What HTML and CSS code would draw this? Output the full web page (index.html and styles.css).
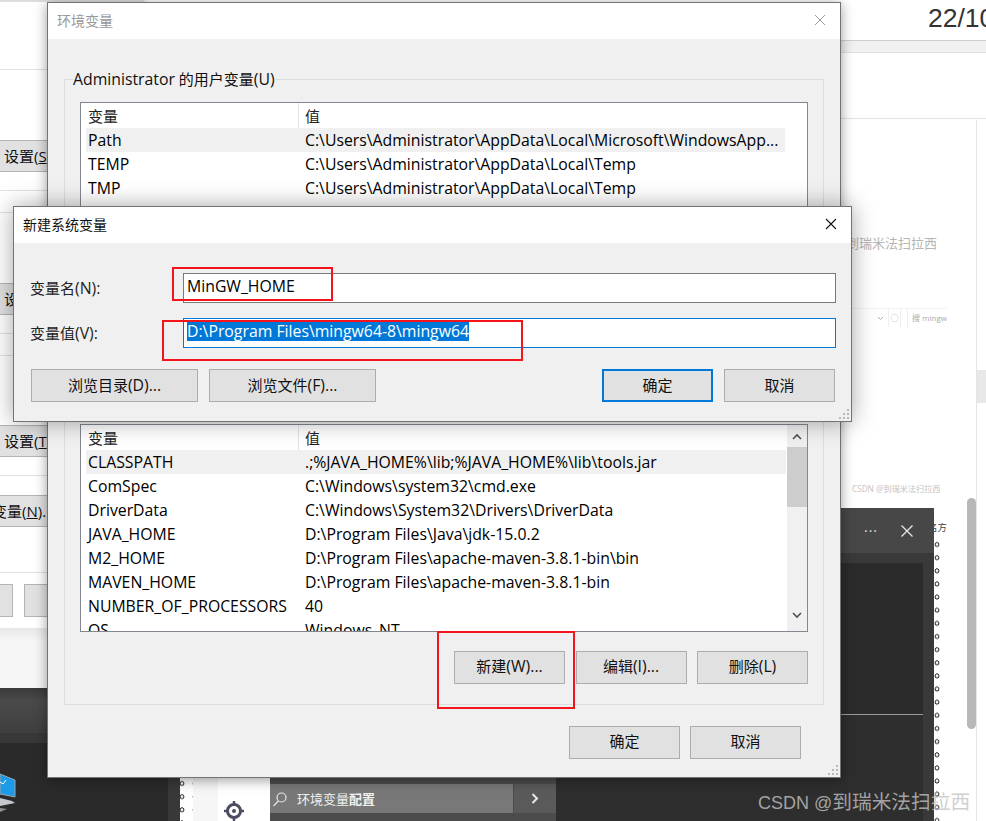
FILE: index.html
```html
<!DOCTYPE html>
<html lang="zh-CN">
  <head>
    <meta charset="UTF-8" />
    <meta name="viewport" content="width=device-width, initial-scale=1.0" />
    <title>环境变量</title>
    <link rel="stylesheet" href="styles.css">
  </head>
  <body>
    <div class="desk">
      <!-- blog page behind everything -->
      <div class="blog">
        <div class="blog-date">22/10</div>
        <div class="blog-band"></div>
        <div class="blog-head"></div>
        <div class="blog-side"></div>
        <div class="blog-side-block"></div>
        <div class="blog-scroll"></div>
        <div class="blog-author">到瑞米法扫拉西</div>
        <div class="blog-tools">
          <span class="blog-select"><svg width="7" height="5" viewBox="0 0 7 5"><path d="M1 1l2.500 2.500L6 1" fill="none" stroke="#aaa" stroke-width="1"/></svg></span>
          <span class="blog-tool">&#9675;</span>
          <span class="blog-search">搜 mingw</span>
        </div>
        <div class="blog-mark">CSDN @到瑞米法扫拉西</div>
        <div class="blog-label">名方</div>
      </div>

      <!-- system properties window, only the left edge shows -->
      <div class="side-win">
        <div class="side-line first"></div>
        <div class="side-btn top-a">设置(<u>S</u></div>
        <div class="side-line near"></div>
        <div class="side-line far"></div>
        <div class="side-btn top-b">设置</div>
        <div class="side-line near"></div>
        <div class="side-line far"></div>
        <div class="side-btn top-c">设置(<u>T</u></div>
        <div class="side-line near"></div>
        <div class="side-btn top-d cut">变量(<u>N</u>).</div>
        <div class="side-line low"></div>
        <div class="side-foot">
          <div class="side-btn small"></div>
          <div class="side-btn wide"></div>
        </div>
      </div>
      <div class="side-under"></div>

      <!-- dark window bottom left -->
      <div class="dark-left">
        <div class="dark-left-head"></div>
        <svg class="pc-icon" width="16" height="40" viewBox="0 0 16 40">
          <path d="M0 2l15 6v17L0 22z" fill="#1e9be8" stroke="#9aa4ad" stroke-width="1"/>
          <path d="M0 10l3 2 3-4" fill="none" stroke="#fff" stroke-width="1"/>
          <path d="M0 26l12 3 3 2-15 3z" fill="#c4c8cc"/>
          <path d="M0 36l7 1-7 3z" fill="#8d9196"/>
        </svg>
      </div>
      <div class="ring-strip strip-left"></div>
      <div class="white-col">
        <svg width="20" height="20" viewBox="0 0 20 20">
          <circle cx="10" cy="10" r="6.500" fill="none" stroke="#4c4c63" stroke-width="3"/>
          <circle cx="10" cy="10" r="2" fill="#4c4c63"/>
          <path d="M10 0v5M10 15v5M0 10h5M15 10h5" stroke="#4c4c63" stroke-width="2.500"/>
        </svg>
      </div>
      <div class="search-area">
        <div class="search-box">
          <svg width="16" height="16" viewBox="0 0 16 16">
            <circle cx="9.500" cy="6.500" r="4.500" fill="none" stroke="#e6e6e6" stroke-width="1.200"/>
            <path d="M6.300 10L1.500 15" stroke="#e6e6e6" stroke-width="1.200"/>
          </svg>
          <span class="search-text">环境变量<b>配置</b></span>
        </div>
        <div class="search-go">
          <svg width="8" height="11" viewBox="0 0 8 11"><path d="M1.500 1l4.500 4.500L1.500 10" fill="none" stroke="#e8e8e8" stroke-width="2"/></svg>
        </div>
      </div>

      <!-- dark window bottom right -->
      <div class="dark-right">
        <div class="dark-title">
          <span class="dark-dots">···</span>
          <svg width="14" height="14" viewBox="0 0 14 14"><path d="M1.500 1.500l11 11M12.500 1.500l-11 11" stroke="#e8e8e8" stroke-width="1.300"/></svg>
        </div>
        <div class="dark-body">
          <div class="dark-pane"></div>
          <div class="dark-pane-low"></div>
        </div>
      </div>
      <div class="ring-strip strip-right"></div>

      <!-- 环境变量 -->
      <div class="win env-win">
        <div class="win-title muted">
          <span>环境变量</span>
          <svg width="12" height="12" viewBox="0 0 12 12"><path d="M1 1l10 10M11 1L1 11" stroke="#9a9a9a" stroke-width="1"/></svg>
        </div>
        <div class="env-body">
          <fieldset class="group">
            <legend><span class="en">Administrator</span> 的用户变量<span class="en">(U)</span></legend>
            <div class="list list-user">
              <div class="list-head"><span class="col-name">变量</span><span class="col-value">值</span></div>
              <div class="list-row active"><span class="col-name">Path</span><span class="col-value">C:\Users\Administrator\AppData\Local\Microsoft\WindowsApp...</span></div>
              <div class="list-row"><span class="col-name">TEMP</span><span class="col-value">C:\Users\Administrator\AppData\Local\Temp</span></div>
              <div class="list-row"><span class="col-name">TMP</span><span class="col-value">C:\Users\Administrator\AppData\Local\Temp</span></div>
            </div>
            <div class="list list-system">
              <div class="list-rows">
                <div class="list-head"><span class="col-name">变量</span><span class="col-value">值</span></div>
                <div class="list-row active"><span class="col-name">CLASSPATH</span><span class="col-value">.;%JAVA_HOME%\lib;%JAVA_HOME%\lib\tools.jar</span></div>
                <div class="list-row"><span class="col-name">ComSpec</span><span class="col-value">C:\Windows\system32\cmd.exe</span></div>
                <div class="list-row"><span class="col-name">DriverData</span><span class="col-value">C:\Windows\System32\Drivers\DriverData</span></div>
                <div class="list-row"><span class="col-name">JAVA_HOME</span><span class="col-value">D:\Program Files\Java\jdk-15.0.2</span></div>
                <div class="list-row"><span class="col-name">M2_HOME</span><span class="col-value">D:\Program Files\apache-maven-3.8.1-bin\bin</span></div>
                <div class="list-row"><span class="col-name">MAVEN_HOME</span><span class="col-value">D:\Program Files\apache-maven-3.8.1-bin</span></div>
                <div class="list-row"><span class="col-name">NUMBER_OF_PROCESSORS</span><span class="col-value">40</span></div>
                <div class="list-row"><span class="col-name">OS</span><span class="col-value">Windows_NT</span></div>
              </div>
              <div class="scrollbar">
                <svg width="10" height="7" viewBox="0 0 10 7"><path d="M1 6l4-4 4 4" fill="none" stroke="#505050" stroke-width="1.600"/></svg>
                <div class="scroll-track"><div class="scroll-thumb"></div></div>
                <svg width="10" height="7" viewBox="0 0 10 7"><path d="M1 1l4 4 4-4" fill="none" stroke="#505050" stroke-width="1.600"/></svg>
              </div>
            </div>
            <div class="btn-row list-btns">
              <div class="btn">新建<span class="en">(W)...</span></div>
              <div class="btn">编辑<span class="en">(I)...</span></div>
              <div class="btn">删除<span class="en">(L)</span></div>
            </div>
          </fieldset>
          <div class="btn-row env-btns">
            <div class="btn">确定</div>
            <div class="btn">取消</div>
          </div>
        </div>
        <svg class="grip" width="11" height="11" viewBox="0 0 11 11"><path d="M8 0h2v2H8zM8 4h2v2H8zM8 8h2v2H8zM4 4h2v2H4zM4 8h2v2H4zM0 8h2v2H0z" fill="#b8b8b8"/></svg>
      </div>

      <!-- 新建系统变量 -->
      <div class="win new-win">
        <div class="win-title">
          <span>新建系统变量</span>
          <svg width="12" height="12" viewBox="0 0 12 12"><path d="M1 1l10 10M11 1L1 11" stroke="#111" stroke-width="1.100"/></svg>
        </div>
        <div class="new-body">
          <div class="field">
            <label>变量名<span class="en">(N):</span></label>
            <div class="text-box">MinGW_HOME</div>
          </div>
          <div class="field">
            <label>变量值<span class="en">(V):</span></label>
            <div class="text-box focus"><span class="picked">D:\Program Files\mingw64-8\mingw64</span></div>
          </div>
          <div class="new-btns">
            <div class="btn-row">
              <div class="btn browse">浏览目录<span class="en">(D)...</span></div>
              <div class="btn browse">浏览文件<span class="en">(F)...</span></div>
            </div>
            <div class="btn-row">
              <div class="btn default">确定</div>
              <div class="btn">取消</div>
            </div>
          </div>
        </div>
        <svg class="grip" width="11" height="11" viewBox="0 0 11 11"><path d="M8 0h2v2H8zM8 4h2v2H8zM8 8h2v2H8zM4 4h2v2H4zM4 8h2v2H4zM0 8h2v2H0z" fill="#b8b8b8"/></svg>
      </div>

      <!-- red marks added on the screenshot -->
      <div class="mark mark-name"></div>
      <div class="mark mark-value"></div>
      <div class="mark mark-new"></div>

      <div class="watermark">CSDN @<span class="watermark-name">到瑞米法扫拉西</span></div>
    </div>
  </body>
</html>
```

FILE: styles.css
```css
html,
body {
  margin: 0;
  padding: 0;
}

body {
  font-family: "Open Sans", "Noto Sans CJK SC", sans-serif;
  font-size: 15px;
  color: #000;
}

/* latin text runs a bit larger than the chinese in the screenshot */
.en {
  font-size: 15.800px;
}

.desk {
  position: relative;
  width: 986px;
  height: 821px;
  overflow: hidden;
  background-color: #fff;
}

/* blog page */
.blog {
  position: absolute;
  left: 840px;
  top: 0;
  width: 146px;
  height: 821px;
}

.blog-date {
  padding: 1px 0 0 88px;
  height: 40px;
  box-sizing: border-box;
  font-family: "Liberation Sans", sans-serif;
  font-size: 26.500px;
  line-height: 34px;
  color: #333;
  white-space: nowrap;
}

.blog-band {
  height: 11px;
  background-color: #f1f1f1;
  border-top: 1px solid #cfcfcf;
  border-bottom: 1px solid #e2e2e2;
}

.blog-head {
  height: 65px;
  border-bottom: 1px solid #e4e4e4;
}

.blog-side {
  position: absolute;
  left: 136px;
  top: 120px;
  width: 1px;
  height: 701px;
  background-color: #e4e4e4;
}

.blog-side-block {
  position: absolute;
  left: 137px;
  top: 370px;
  width: 9px;
  height: 33px;
  background-color: #e8e8e8;
}

.blog-scroll {
  position: absolute;
  left: 127px;
  top: 498px;
  width: 9px;
  height: 231px;
  border-radius: 5px;
  background-color: #b8b8b8;
}

.blog-author {
  position: absolute;
  left: 6px;
  top: 234px;
  font-size: 13px;
  line-height: 18px;
  color: #b5b5b5;
  white-space: nowrap;
}

.blog-tools {
  position: absolute;
  left: 0;
  top: 308px;
  width: 107px;
  height: 18px;
  display: flex;
  overflow: hidden;
  border-top: 1px solid #f2f2f2;
  font-size: 8px;
  line-height: 17px;
  color: #aaa;
}

.blog-select {
  width: 59px;
  box-sizing: border-box;
  padding-right: 4px;
  text-align: right;
  border-right: 1px solid #eee;
}

.blog-tool {
  width: 14px;
  text-align: center;
  border-right: 1px solid #eee;
  margin-right: 6px;
}

.blog-search {
  white-space: nowrap;
  padding-left: 4px;
  border-left: 1px solid #eee;
}

.blog-mark {
  position: absolute;
  left: 12px;
  top: 482px;
  font-size: 8.200px;
  line-height: 14px;
  color: #c4c4c4;
  white-space: nowrap;
}

.blog-label {
  position: absolute;
  left: 94px;
  top: 521px;
  width: 13px;
  overflow: hidden;
  direction: rtl;
  font-size: 9.500px;
  line-height: 14px;
  color: #444;
  white-space: nowrap;
}

/* window behind on the left */
.side-win {
  position: absolute;
  left: 0;
  top: 0;
  width: 144px;
  height: 628px;
  box-sizing: border-box;
  padding-top: 69px;
  background-color: #fff;
  border-top: 2px solid #ddd;
  box-shadow: 0 2px 6px rgba(0, 0, 0, 0.45);
}

.side-line {
  height: 1px;
  background-color: #e2e2e2;
}

.side-line.first {
  margin-top: -2px;
}

.side-line.near {
  margin-top: 18px;
}

.side-line.far {
  margin-top: 21px;
}

.side-line.low {
  margin-top: 45px;
}

.side-btn {
  height: 32px;
  box-sizing: border-box;
  margin-left: -1px;
  padding-left: 4px;
  background-color: #e1e1e1;
  border: 1px solid #b4b4b4;
  line-height: 30px;
  white-space: nowrap;
  overflow: hidden;
  color: #111;
}

.side-btn.top-a {
  margin-top: 70px;
}

.side-btn.top-b {
  margin-top: 70px;
}

.side-btn.top-c {
  margin-top: 69px;
}

.side-btn.top-d {
  margin-top: 19px;
}

.side-btn.cut {
  text-indent: -12px;
}

.side-foot {
  display: flex;
  gap: 11px;
  margin-top: 11px;
}

.side-foot .side-btn {
  height: 33px;
  margin-left: 0;
}

.side-btn.small {
  width: 14px;
  margin-left: -1px;
}

.side-btn.wide {
  width: 60px;
}

.side-under {
  position: absolute;
  left: 0;
  top: 628px;
  width: 144px;
  height: 60px;
  background: linear-gradient(#e8e8e8, #f6f6f6 14px, #f6f6f6);
}

/* dark windows */
.dark-left {
  position: absolute;
  left: 0;
  top: 688px;
  width: 168px;
  height: 133px;
  background-color: #2a2a2a;
  border-right: 12px solid #383838;
}

.dark-left-head {
  height: 45px;
  background: linear-gradient(#3a3a3a, #4a4a4a 30%, #3f3f3f);
  border-bottom: 10px solid #383838;
}

.pc-icon {
  position: absolute;
  left: 0;
  top: 84px;
}

.ring-strip {
  position: absolute;
  width: 13px;
  background-color: #fff;
  background-image: radial-gradient(circle at 6px 6.500px, #fff 1.200px, #333 1.700px, #333 2.200px, transparent 2.700px);
  background-size: 13px 13.150px;
}

.strip-left {
  left: 180px;
  top: 778px;
  height: 43px;
  background-position: -4px -1px;
}

.strip-right {
  left: 934px;
  top: 538px;
  height: 283px;
  background-position: -3px 0;
}

.white-col {
  position: absolute;
  left: 193px;
  top: 777px;
  width: 77px;
  height: 44px;
  background: linear-gradient(90deg, #f6f6f6 25px, #fff 25px);
  display: flex;
  justify-content: flex-end;
  align-items: flex-end;
  padding-right: 26px;
  box-sizing: border-box;
}

.search-area {
  position: absolute;
  left: 270px;
  top: 777px;
  width: 296px;
  height: 44px;
  box-sizing: border-box;
  padding: 7px 0 8px 0;
  display: flex;
  gap: 1px;
  background-color: #4c4c4c;
  border-right: 10px solid #363636;
}

.search-box {
  width: 243px;
  display: flex;
  align-items: center;
  gap: 9px;
  padding-left: 2px;
  box-sizing: border-box;
  background-color: #787878;
}

.search-text {
  font-size: 13px;
  color: #f0f0f0;
}

.search-text b {
  font-weight: 700;
}

.search-go {
  width: 42px;
  display: flex;
  align-items: center;
  justify-content: center;
  background-color: #5a5a5a;
}

.dark-right {
  position: absolute;
  left: 556px;
  top: 508px;
  width: 378px;
  height: 313px;
  background-color: #393939;
}

.dark-title {
  height: 45px;
  display: flex;
  justify-content: flex-end;
  align-items: center;
  gap: 22px;
  padding-right: 20px;
  box-sizing: border-box;
  background-color: #474747;
}

.dark-dots {
  font-size: 14px;
  line-height: 14px;
  letter-spacing: 1px;
  color: #ddd;
}

.dark-body {
  padding: 10px 11px 0 0;
}

.dark-pane {
  height: 151px;
  background-color: #2b2b2b;
  border-bottom: 1px solid #9a9a9a;
}

.dark-pane-low {
  height: 106px;
  background-color: #2e2e2e;
}

/* dialogs */
.win {
  position: absolute;
  box-sizing: border-box;
  background-color: #f0f0f0;
  border: 1px solid #737373;
}

.env-win {
  left: 47px;
  top: 2px;
  width: 794px;
  height: 776px;
  box-shadow: 0 2px 12px rgba(0, 0, 0, 0.4);
}

.new-win {
  left: 13px;
  top: 206px;
  width: 839px;
  height: 216px;
  box-shadow: 0 0 22px rgba(0, 0, 0, 0.35);
}

.win-title {
  height: 36px;
  box-sizing: border-box;
  display: flex;
  justify-content: space-between;
  align-items: center;
  padding: 0 14px 2px 9px;
  background-color: #fff;
  font-size: 14px;
  color: #111;
}

.win-title.muted {
  padding-right: 14px;
  color: #999;
}

.env-body {
  padding: 30px 16px 0;
}

.group {
  margin: 0;
  padding: 13px 15px 20px;
  border: 1px solid #dcdcdc;
  min-width: 0;
}

.group legend {
  padding: 0;
  margin-left: -7px;
  line-height: 20px;
  color: #111;
}

.list {
  box-sizing: border-box;
  border: 1px solid #828790;
  background-color: #fff;
  overflow: hidden;
}

.list-user {
  height: 300px;
  padding-left: 5px;
  padding-right: 22px;
}

.list-system {
  display: flex;
  height: 208px;
  margin-top: 22px;
  padding-left: 5px;
}

.list-rows {
  width: 700px;
}

.list-head {
  height: 25px;
  display: flex;
  line-height: 26px;
  color: #222;
}

.list-head .col-value {
  border-left: 1px solid #e5e5e5;
  padding-left: 6px;
}

.list-row {
  height: 24px;
  display: flex;
  font-size: 15.800px;
  line-height: 24px;
}

.list-row.active {
  background-color: #f0f0f0;
}

.col-name {
  width: 212px;
  box-sizing: border-box;
  padding-left: 2px;
  white-space: nowrap;
}

.col-value {
  white-space: nowrap;
}

.list-row .col-value {
  padding-left: 7px;
}

.scrollbar {
  width: 20px;
  margin-left: 1px;
  padding-top: 8px;
  box-sizing: border-box;
  display: flex;
  flex-direction: column;
  align-items: center;
  background-color: #f0f0f0;
}

.scroll-track {
  width: 100%;
  height: 172px;
  padding-top: 7px;
  box-sizing: border-box;
}

.scroll-thumb {
  height: 60px;
  background-color: #cdcdcd;
}

.btn-row {
  display: flex;
  gap: 11px;
}

.list-btns {
  justify-content: flex-end;
  gap: 10.500px;
  margin-top: 19px;
}

.env-btns {
  justify-content: flex-end;
  gap: 10px;
  margin-top: 21px;
  padding-right: 23px;
}

.btn {
  width: 111px;
  height: 33px;
  box-sizing: border-box;
  background-color: #e1e1e1;
  border: 1px solid #adadad;
  line-height: 31px;
  text-align: center;
  color: #111;
}

.list-btns .btn,
.env-btns .btn {
  line-height: 29px;
}

.btn.default {
  border: 2px solid #0078d7;
  line-height: 29px;
}

.btn.browse {
  width: 167px;
}

.new-body {
  padding: 30px 15px 0 16px;
}

.field {
  display: flex;
  align-items: center;
  margin-bottom: 15px;
}

.field label {
  width: 153px;
  color: #222;
}

.text-box {
  flex: 1;
  height: 30px;
  box-sizing: border-box;
  padding-left: 3px;
  background-color: #fff;
  border: 1px solid #7a7a7a;
  font-size: 15.800px;
  line-height: 25px;
}

.text-box.focus {
  border-color: #0078d7;
}

.picked {
  display: inline-block;
  height: 19px;
  margin-top: 3px;
  line-height: 19px;
  vertical-align: top;
  background-color: #0078d7;
  color: #fff;
}

.new-btns {
  display: flex;
  justify-content: space-between;
  margin-top: 21px;
  padding-left: 1px;
  padding-right: 1px;
}

.grip {
  position: absolute;
  right: 1px;
  bottom: 1px;
}

/* red marks */
.mark {
  position: absolute;
  box-sizing: border-box;
  border: 2px solid #f4141c;
}

.mark-name {
  left: 172px;
  top: 267px;
  width: 161px;
  height: 34px;
}

.mark-value {
  left: 162px;
  top: 320px;
  width: 361px;
  height: 41px;
}

.mark-new {
  left: 437px;
  top: 631px;
  width: 138px;
  height: 78px;
}

.watermark {
  position: absolute;
  left: 758px;
  top: 788px;
  font-family: "Liberation Sans", "Noto Sans CJK SC", sans-serif;
  font-size: 18px;
  line-height: 28px;
  color: rgba(195, 195, 195, 0.8);
  white-space: nowrap;
}

.watermark-name {
  font-size: 19.700px;
}
```
